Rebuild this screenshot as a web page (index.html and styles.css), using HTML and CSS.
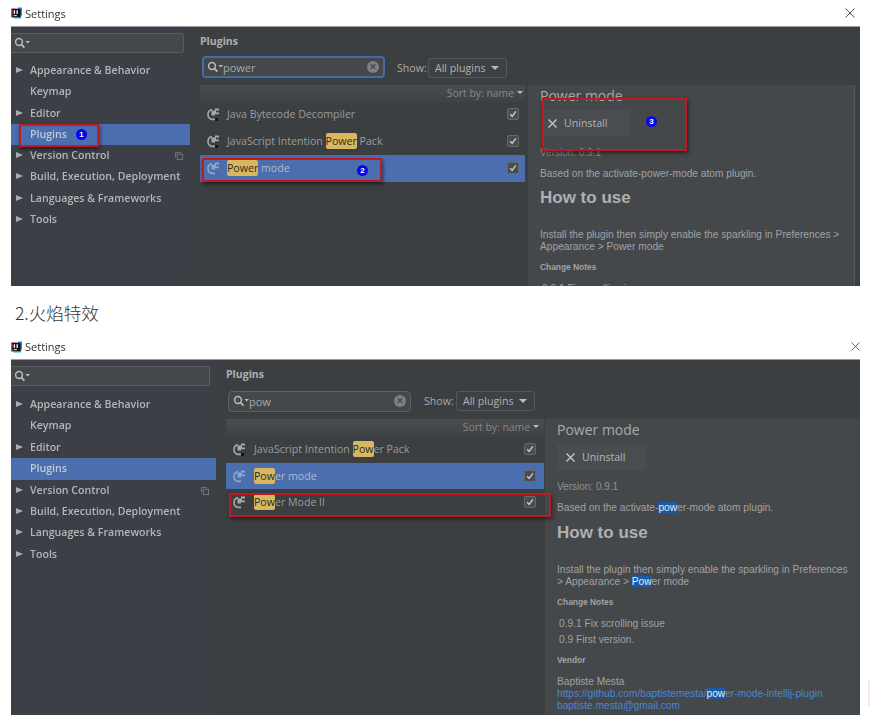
FILE: index.html
```html
<!DOCTYPE html>
<html lang="en">
<head>
<meta charset="utf-8">
<title>Settings</title>
<link rel="stylesheet" href="styles.css">
</head>
<body>
<svg class="defs" width="0" height="0" aria-hidden="true">
  <symbol id="plug" viewBox="0 0 14 14">
    <path d="M6 2.6A5 5 0 0 0 6 12.4H9" fill="none" stroke="currentColor" stroke-width="1.6"/>
    <path d="M5.5 3.5H9V1.6H13V3.4H10V5.4H13V7.2H9V8.6H5.5Z" fill="currentColor"/>
  </symbol>
  <symbol id="logo" viewBox="0 0 12 12">
    <path d="M0 1H6V4H0Z" fill="#f0365e"/><path d="M0 4H2V11H0Z" fill="#ee2b7c"/>
    <path d="M7 0H12V9H9Z" fill="#1c8fe8"/><path d="M1 9H11V12H3Z" fill="#18b9d8"/>
    <rect x="1.5" y="1.5" width="9" height="9" fill="#111"/>
    <rect x="3" y="3" width="1.4" height="4" fill="#fff"/><rect x="6" y="3" width="1.4" height="4" fill="#fff"/><rect x="3" y="8.4" width="3.5" height="1" fill="#fff"/>
  </symbol>
  <symbol id="mag" viewBox="0 0 16 12">
    <circle cx="5" cy="5" r="3.4" fill="none" stroke="currentColor" stroke-width="1.5"/>
    <path d="M7.4 7.4L10.4 10.6" stroke="currentColor" stroke-width="1.8"/>
    <path d="M11.5 4H16L13.75 6.5Z" fill="currentColor"/>
  </symbol>
  <symbol id="check" viewBox="0 0 12 12">
    <path d="M2.6 6.4L5 9L9.4 2.8" fill="none" stroke="#c8c8c8" stroke-width="1.7"/>
  </symbol>
  <symbol id="copy" viewBox="0 0 9 9">
    <path d="M.5 6.5V.5H6.5" fill="none" stroke="currentColor"/>
    <rect x="2.5" y="2.5" width="6" height="6" fill="none" stroke="currentColor"/>
  </symbol>
  <symbol id="close" viewBox="0 0 10 10">
    <path d="M.5 .5L9.5 9.5M9.5 .5L.5 9.5" fill="none" stroke="currentColor"/>
  </symbol>
</svg>

<section class="shot shot-a">
  <header class="titlebar">
    <svg class="app-logo"><use href="#logo"/></svg>
    <span class="title-text">Settings</span>
    <svg class="win-close"><use href="#close"/></svg>
  </header>
  <div class="ide">
    <aside class="sidebar">
      <div class="side-search"><svg class="mag"><use href="#mag"/></svg></div>
      <ul class="tree">
        <li class="tree-row arrow">Appearance &amp; Behavior</li>
        <li class="tree-row">Keymap</li>
        <li class="tree-row arrow">Editor</li>
        <li class="tree-row selected">Plugins</li>
        <li class="tree-row arrow">Version Control<svg class="copy"><use href="#copy"/></svg></li>
        <li class="tree-row arrow">Build, Execution, Deployment</li>
        <li class="tree-row arrow">Languages &amp; Frameworks</li>
        <li class="tree-row arrow">Tools</li>
      </ul>
    </aside>
    <main class="main">
      <h2 class="main-title">Plugins</h2>
      <div class="toolbar">
        <div class="search focused">
          <svg class="mag"><use href="#mag"/></svg><span class="search-text">power</span>
          <span class="clear">×</span>
        </div>
        <span class="show-label">Show:</span>
        <div class="dropdown">All plugins<i class="caret"></i></div>
      </div>
      <div class="columns">
        <div class="list">
          <div class="sort">Sort by: name<i class="caret small"></i></div>
          <div class="plugin"><svg class="plug"><use href="#plug"/><rect class="plug-dot" x="9" y="11" width="3" height="3"/></svg><span class="name">Java Bytecode Decompiler</span><span class="box"><svg><use href="#check"/></svg></span></div>
          <div class="plugin"><svg class="plug"><use href="#plug"/><rect class="plug-dot" x="9" y="11" width="3" height="3"/></svg><span class="name">JavaScript Intention <mark>Power</mark> Pack</span><span class="box"><svg><use href="#check"/></svg></span></div>
          <div class="plugin active"><svg class="plug"><use href="#plug"/></svg><span class="name"><mark>Power</mark> mode</span><span class="box"><svg><use href="#check"/></svg></span></div>
        </div>
        <article class="detail">
          <h3 class="d-title">Power mode</h3>
          <button class="uninstall"><svg class="x"><use href="#close"/></svg>Uninstall</button>
          <p class="d-version">Version: 0.9.1</p>
          <p class="d-text d-based">Based on the activate-power-mode atom plugin.</p>
          <h1 class="d-how">How to use</h1>
          <p class="d-text d-install">Install the plugin then simply enable the sparkling in Preferences &gt; Appearance &gt; Power mode</p>
          <h4 class="d-head">Change Notes</h4>
          <p class="d-text d-note">0.9.1 Fix scrolling issue</p>
        </article>
      </div>
    </main>
  </div>
  <div class="mark-box mb-a1"></div><span class="num n-a1">1</span>
  <div class="mark-box mb-a2"></div><span class="num n-a2">2</span>
  <div class="mark-box mb-a3"></div><span class="num n-a3">3</span>
</section>

<h2 class="step">2.火焰特效</h2>

<section class="shot shot-b">
  <header class="titlebar">
    <svg class="app-logo"><use href="#logo"/></svg>
    <span class="title-text">Settings</span>
    <svg class="win-close"><use href="#close"/></svg>
  </header>
  <div class="ide">
    <aside class="sidebar">
      <div class="side-search"><svg class="mag"><use href="#mag"/></svg></div>
      <ul class="tree">
        <li class="tree-row arrow">Appearance &amp; Behavior</li>
        <li class="tree-row">Keymap</li>
        <li class="tree-row arrow">Editor</li>
        <li class="tree-row selected">Plugins</li>
        <li class="tree-row arrow">Version Control<svg class="copy"><use href="#copy"/></svg></li>
        <li class="tree-row arrow">Build, Execution, Deployment</li>
        <li class="tree-row arrow">Languages &amp; Frameworks</li>
        <li class="tree-row arrow">Tools</li>
      </ul>
    </aside>
    <main class="main">
      <h2 class="main-title">Plugins</h2>
      <div class="toolbar">
        <div class="search">
          <svg class="mag"><use href="#mag"/></svg><span class="search-text">pow</span>
          <span class="clear">×</span>
        </div>
        <span class="show-label">Show:</span>
        <div class="dropdown">All plugins<i class="caret"></i></div>
      </div>
      <div class="columns">
        <div class="list">
          <div class="sort">Sort by: name<i class="caret small"></i></div>
          <div class="plugin"><svg class="plug"><use href="#plug"/><rect class="plug-dot" x="9" y="11" width="3" height="3"/></svg><span class="name">JavaScript Intention <mark>Pow</mark>er Pack</span><span class="box"><svg><use href="#check"/></svg></span></div>
          <div class="plugin active"><svg class="plug"><use href="#plug"/></svg><span class="name"><mark>Pow</mark>er mode</span><span class="box"><svg><use href="#check"/></svg></span></div>
          <div class="plugin"><svg class="plug"><use href="#plug"/></svg><span class="name"><mark>Pow</mark>er Mode II</span><span class="box"><svg><use href="#check"/></svg></span></div>
        </div>
        <article class="detail">
          <h3 class="d-title">Power mode</h3>
          <button class="uninstall"><svg class="x"><use href="#close"/></svg>Uninstall</button>
          <p class="d-version">Version: 0.9.1</p>
          <p class="d-text d-based">Based on the activate-<em>pow</em>er-mode atom plugin.</p>
          <h1 class="d-how">How to use</h1>
          <p class="d-text d-install">Install the plugin then simply enable the sparkling in Preferences &gt; Appearance &gt; <em>Pow</em>er mode</p>
          <h4 class="d-head">Change Notes</h4>
          <p class="d-text d-note">0.9.1 Fix scrolling issue</p>
          <p class="d-text d-note">0.9 First version.</p>
          <h4 class="d-head d-vendor">Vendor</h4>
          <p class="d-text d-author">Baptiste Mesta<br><a href="#">https://github.com/baptistemesta/<em>pow</em>er-mode-intellij-plugin</a><br><a href="#">baptiste.mesta@gmail.com</a></p>
        </article>
      </div>
    </main>
  </div>
  <div class="mark-box mb-b1"></div>
</section>
<div class="corner-mark"></div>
</body>
</html>
```

FILE: styles.css
```css
* { box-sizing: border-box; }
html, body { margin: 0; padding: 0; }
body {
  position: relative;
  width: 870px;
  height: 722px;
  overflow: hidden;
  background: #fff;
  font-family: "Open Sans", "Noto Sans", sans-serif;
}
.defs { position: absolute; }

.shot { position: relative; margin-left: 11px; width: 849px; filter: blur(0.45px); }
.shot-a { --side: 179px; --list: 325px; --gap: 3px; --pane-right: 5px; --ide-h: 260px; --bar-h: 26px; --search-gap: 12px; --tree-top: 1px; --tool-bottom: 6px; --dd-left: 0px; --row-h: 21.3px; }
.shot-b { --side: 205px; --list: 318px; --gap: 1px; --pane-right: 0px; --ide-h: 356px; --bar-h: 21px; --search-gap: 13px; --tree-top: 2px; --tool-bottom: 7px; --dd-left: 1px; --row-h: 21.4px; }

.titlebar { height: var(--bar-h); display: flex; align-items: center; gap: 3px; color: #333; }
.shot-b .titlebar { padding-bottom: 4px; }
.app-logo { width: 11px; height: 12px; }
.title-text { font-size: 11px; }
.win-close { width: 10px; height: 10px; margin-left: auto; margin-right: 5px; color: #555; }
.shot-b .win-close { width: 9px; height: 9px; margin-right: 0; }

.ide {
  display: flex;
  height: var(--ide-h);
  overflow: hidden;
  background: #3c3f41;
  border-top: 1px solid #9a9c9e;
  color: #aeb0b2;
}

.sidebar { width: var(--side); flex: none; background: #3c3f46; }
.side-search {
  height: 20px;
  margin: 6px 6px 6px 0;
  padding-left: 3px;
  display: flex;
  align-items: center;
  background: #45484a;
  border: 1px solid #5a5d5f;
  border-left: 0;
  border-radius: 0 3px 3px 0;
}
.mag { width: 16px; height: 12px; color: #bbb; flex: none; }
.tree { list-style: none; margin: 0; padding: var(--tree-top) 0 0; }
.tree-row {
  position: relative;
  height: var(--row-h);
  line-height: 21px;
  padding-left: 19px;
  font-size: 10.6px;
  font-weight: 600;
  white-space: nowrap;
  color: #b4b6b8;
}
.tree-row.selected { background: #4b6eaf; color: #c4cad4; }
.tree-row.arrow::before {
  content: "";
  position: absolute;
  left: 5px;
  top: 7px;
  border-left: 7px solid #a9abad;
  border-top: 3.5px solid transparent;
  border-bottom: 3.5px solid transparent;
}
.copy { position: absolute; right: 7px; top: 7px; width: 8px; height: 8px; color: #777a7c; }

.main { flex: 1; min-width: 0; padding-top: 7px; padding-left: 10px; display: flex; flex-direction: column; background: #3c3f41; }
.main-title { margin: 0; font-size: 10.5px; font-weight: 700; line-height: 14px; color: #aeb0b2; }

.toolbar { display: flex; align-items: center; margin: 9px 0 var(--tool-bottom) 2px; height: 22px; }
.search {
  width: 183px;
  height: 21px;
  padding: 0 4px 0 4px;
  display: flex;
  align-items: center;
  background: #45484a;
  border: 1px solid #5d6062;
  border-radius: 4px;
}
.search.focused { height: 22px; margin-bottom: 2px; padding-left: 3px; border: 2px solid #3f6ea0; }
.search-text { font-size: 11px; color: #a6a8aa; }
.clear {
  margin-left: auto;
  width: 12px;
  height: 12px;
  line-height: 11px;
  text-align: center;
  border-radius: 50%;
  background: #7d8082;
  color: #45484a;
  font-size: 12px;
  font-weight: 700;
}
.show-label { margin-left: var(--search-gap); font-size: 10.6px; color: #a6a8aa; width: 31px; }
.dropdown {
  width: 79px;
  height: 20px;
  margin-left: var(--dd-left);
  padding-left: 6px;
  display: flex;
  align-items: center;
  font-size: 10.6px;
  color: #b0b2b4;
  background: #3e4143;
  border: 1px solid #55585a;
  border-radius: 3px;
}
.caret {
  margin-left: 6px;
  border-top: 4px solid #bbb;
  border-left: 4px solid transparent;
  border-right: 4px solid transparent;
}
.caret.small { margin-left: 3px; border-top-width: 3.5px; border-left-width: 3px; border-right-width: 3px; }

.columns { display: flex; flex: 1; min-height: 0; margin-right: var(--pane-right); gap: var(--gap); }
.list { width: var(--list); flex: none; }
.sort {
  height: 17px;
  display: flex;
  align-items: center;
  justify-content: flex-end;
  padding: 0 2px 2px 0;
  font-size: 10.4px;
  color: #85888a;
  background: linear-gradient(#4a4d4f, #3f4244);
}
.shot-b .sort { padding-right: 5px; }
.plugin {
  height: 26.7px;
  display: flex;
  align-items: center;
  padding: 0 6px 2px 6px;
  font-size: 10.6px;
  color: #9a9c9e;
}
.shot-b .plugin { height: 26.5px; padding: 0 8px 0 6px; }
.plugin.active { background: #4b6eaf; color: #b0bccf; }
.plug { width: 14px; height: 14px; flex: none; color: #a5a7a9; }
.plug-dot { fill: #161616; }
.plugin.active .plug { color: #8ea5cc; }
.name { margin-left: 7px; white-space: nowrap; }
.shot-b .name { margin-left: 8px; }
mark { background: #d8b75e; color: #2b2b2b; border-radius: 2px; padding: 1px 0; }
.box {
  margin-left: auto;
  width: 12px;
  height: 12px;
  flex: none;
  background: #4a4d4f;
  border: 1px solid #66696b;
  border-radius: 2px;
  display: flex;
}
.box svg { width: 10px; height: 10px; }

.detail {
  flex: 1;
  min-width: 0;
  padding: 2px 8px 0 12px;
  background: #45484a;
  font-family: "Liberation Sans", Arial, sans-serif;
  color: #a0a2a4;
  overflow: hidden;
}
.shot-a .detail { border-right: 1px solid #55585a; }
.d-title { margin: 0; font-family: "Open Sans", sans-serif; font-size: 14px; font-weight: 400; line-height: 18px; color: #a8aaac; }
.uninstall {
  display: flex;
  align-items: center;
  width: 87px;
  height: 26px;
  margin: 5px 0 0 3px;
  padding: 0 0 0 5px;
  background: #4a4d4f;
  border: 0;
  border-radius: 3px;
  font-family: "Open Sans", sans-serif;
  font-size: 10.6px;
  color: #b4b6b8;
}
.shot-b .uninstall { margin-left: 0; width: 90px; padding-left: 9px; }
.x { width: 9px; height: 9px; margin-right: 7px; stroke-width: 1.6; color: #c0c2c4; flex: none; }
.d-version { margin: 11px 0 0; font-size: 10px; line-height: 12px; color: #8f9193; }
.d-text { margin: 0; font-size: 10.2px; line-height: 12px; }
.d-based { margin-top: 9px; }
.d-how { margin: 7px 0 0; font-size: 17px; line-height: 22px; font-weight: 700; color: #aeb0b2; }
.shot-b .d-how { margin-top: 8px; }
.d-install { margin-top: 20px; }
.d-head { margin: 8px 0 0; font-size: 8.4px; line-height: 12px; font-weight: 700; color: #a0a2a4; }
.d-note { margin: 4px 0 0 2px; line-height: 12px; }
.d-head + .d-note { margin-top: 10px; }
.d-vendor { margin-top: 8px; }
.d-author { margin-top: 10px; }
em { font-style: normal; background: #1c5aa6; color: #e4ecf6; }
a { color: #4a86d6; text-decoration: none; }

.step {
  margin: 0;
  height: 52px;
  padding: 16px 0 0 15px;
  font-family: "Noto Sans CJK SC", "Noto Sans", sans-serif;
  font-size: 17.5px;
  font-weight: 300;
  line-height: 22px;
  color: #333;
}

.mark-box {
  position: absolute;
  border: 2px solid #bd1a24;
  box-shadow: 1px 2px 4px rgba(0, 0, 0, .55);
}
.mb-a1 { left: 8px; top: 124px; width: 80px; height: 23px; }
.mb-a2 { left: 191px; top: 158px; width: 180px; height: 24px; }
.mb-a3 { left: 531px; top: 98px; width: 145px; height: 53px; }
.mb-b1 { left: 218px; top: 155px; width: 322px; height: 24px; }
.num {
  position: absolute;
  width: 11px;
  height: 11px;
  border-radius: 50%;
  background: #0505ee;
  color: #fff;
  font-family: "Liberation Sans", sans-serif;
  font-size: 8px;
  font-weight: 700;
  line-height: 11px;
  text-align: center;
}
.n-a1 { left: 65px; top: 129px; }
.n-a2 { left: 346px; top: 165px; }
.n-a3 { left: 635px; top: 116px; }

.corner-mark {
  position: absolute;
  left: 868px;
  top: 680px;
  width: 2px;
  height: 26px;
  background: #fbe9e9;
}
```
